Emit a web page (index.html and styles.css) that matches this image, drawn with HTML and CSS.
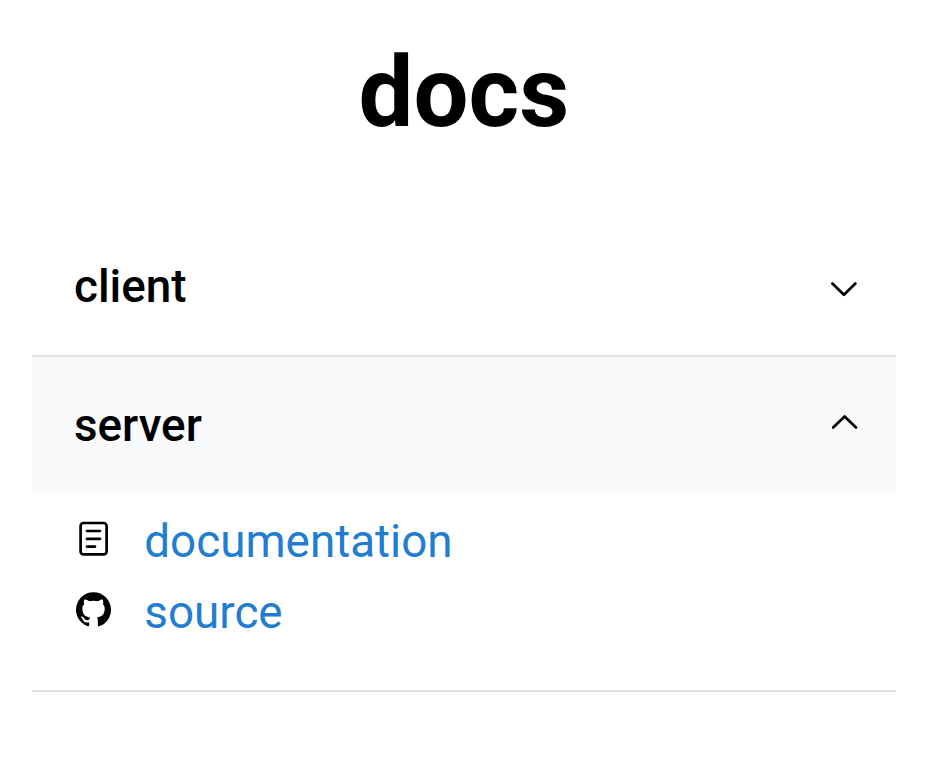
FILE: index.html
```html
<!DOCTYPE html>
<html lang="en">
<head>
<meta charset="utf-8">
<title>docs</title>
<link rel="stylesheet" href="styles.css">
</head>
<body>
<main class="page">
  <h1 class="title">docs</h1>
  <section class="item">
    <button class="control"><span>client</span>
      <svg class="chevron" viewBox="0 0 32 32"><path d="M4.400 11.500 15.900 22.700 27.400 11.500"/></svg>
    </button>
  </section>
  <section class="item open">
    <button class="control"><span>server</span>
      <svg class="chevron" viewBox="0 0 32 32"><path d="M5.200 18.500 16.600 7.500 28 18.500"/></svg>
    </button>
    <ul class="links">
      <li><svg class="icon" viewBox="0 0 36 36"><rect class="line" x="5.600" y="2" width="26" height="31.400" rx="3"/><path class="line" d="M12 10h13M12 17.900h13M12 25.600h8"/></svg><a href="#">documentation</a></li>
      <li><svg class="icon" viewBox="-.457 -.1 16.457 16.457"><path d="M8 0C3.580 0 0 3.580 0 8c0 3.540 2.290 6.530 5.470 7.590.4.070.55-.17.55-.38 0-.19-.01-.82-.01-1.490-2.010.37-2.530-.49-2.690-.94-.09-.23-.48-.94-.82-1.130-.28-.15-.68-.52-.01-.53.63-.01 1.080.58 1.230.82.72 1.210 1.870.87 2.330.66.07-.52.28-.87.51-1.070-1.780-.2-3.640-.89-3.640-3.950 0-.87.31-1.590.82-2.150-.08-.2-.36-1.020.08-2.120 0 0 .67-.21 2.200.82.64-.18 1.320-.27 2-.27s1.360.09 2 .27c1.530-1.040 2.200-.82 2.200-.82.44 1.100.16 1.920.08 2.120.51.56.82 1.270.82 2.150 0 3.070-1.870 3.750-3.650 3.950.29.25.54.73.54 1.480 0 1.070-.01 1.930-.01 2.200 0 .21.15.46.55.38A8.010 8.010 0 0 0 16 8c0-4.420-3.580-8-8-8z"/></svg><a href="#">source</a></li>
    </ul>
  </section>
</main>
</body>
</html>
```
FILE: styles.css
```css
body {
  margin: 0;
  background: #fff;
  color: #000;
  font-family: Roboto, sans-serif;
}
.page {
  width: 864px;
  margin-left: 32px;
  padding-top: 31px;
}
.title {
  margin: 0 0 66px;
  font-size: 97.500px;
  line-height: 124px;
  font-weight: 700;
  text-align: center;
}
.item {
  border-bottom: 2px solid #dee2e6;
}
.control {
  display: flex;
  width: 100%;
  height: 136px;
  padding: 0 36px 0 42px;
  border: 0;
  align-items: center;
  justify-content: space-between;
  background: none;
  color: inherit;
  font: 500 45.800px/70px Roboto, sans-serif;
}
.control span { padding-top: 2px; }
.item:not(.open) .control { height: 134px; }
.item:not(.open) .control span { padding: 0 0 2px; }
.open .control { background: #f8f9fb; }
.chevron {
  width: 32px;
  height: 32px;
  fill: none;
  stroke: #000;
  stroke-width: 2.700;
  stroke-linecap: round;
  stroke-linejoin: round;
}
.links {
  height: 197px;
  margin: 0;
  padding: 13px 42px 0;
  box-sizing: border-box;
  list-style: none;
}
.links li {
  display: flex;
  height: 71px;
  align-items: center;
  font-size: 45.800px;
  line-height: 71px;
}
.links a {
  color: #227dd0;
  text-decoration: none;
}
.icon {
  width: 36px;
  height: 36px;
  margin: 0 33.300px 5px 1px;
}
.line {
  fill: none;
  stroke: #000;
  stroke-width: 2.700;
  stroke-linecap: round;
}
```
